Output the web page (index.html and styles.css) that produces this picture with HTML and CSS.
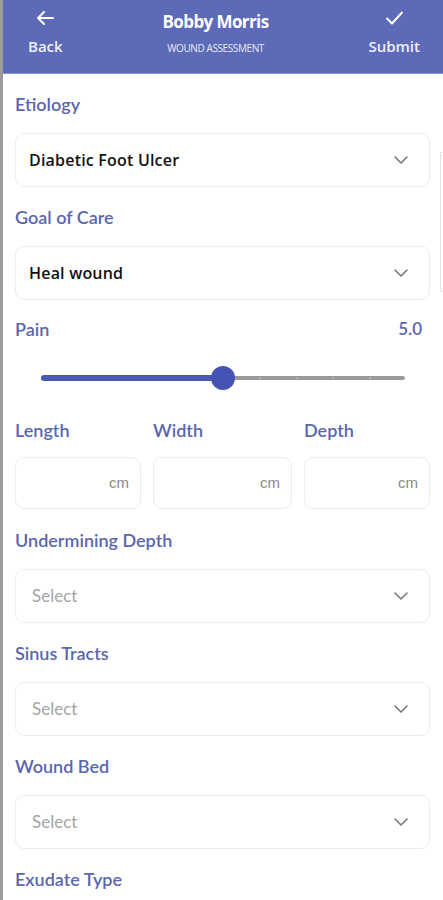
FILE: index.html
```html
<!DOCTYPE html>
<html lang="en">
<head>
<meta charset="UTF-8">
<meta name="viewport" content="width=device-width, initial-scale=1.0">
<title>Wound Assessment</title>
<link rel="stylesheet" href="styles.css">
</head>
<body>
<div class="screen">
	<div class="topbar">
		<a class="bar-btn" href="#">
			<svg width="20" height="16" viewBox="0 0 20 16"><path d="M18 8H3M9 2L3 8l6 6" fill="none" stroke="#fff" stroke-width="2" stroke-linecap="round" stroke-linejoin="round"/></svg>
			<span>Back</span>
		</a>
		<div class="bar-title">
			<h1>Bobby Morris</h1>
			<p>WOUND ASSESSMENT</p>
		</div>
		<a class="bar-btn" href="#">
			<svg width="20" height="16" viewBox="0 0 20 16"><path d="M3 8.5l5 5L18 2.5" fill="none" stroke="#fff" stroke-width="2" stroke-linecap="round" stroke-linejoin="round"/></svg>
			<span>Submit</span>
		</a>
	</div>

	<div class="form">
		<div class="field">
			<label>Etiology</label>
			<div class="select">
				<span class="val">Diabetic Foot Ulcer</span>
				<svg class="chev" width="16" height="10" viewBox="0 0 16 10"><path d="M2 2l6 6 6-6" fill="none" stroke="#777" stroke-width="1.6" stroke-linecap="round" stroke-linejoin="round"/></svg>
			</div>
		</div>
		<div class="field">
			<label>Goal of Care</label>
			<div class="select">
				<span class="val">Heal wound</span>
				<svg class="chev" width="16" height="10" viewBox="0 0 16 10"><path d="M2 2l6 6 6-6" fill="none" stroke="#777" stroke-width="1.6" stroke-linecap="round" stroke-linejoin="round"/></svg>
			</div>
		</div>
		<div class="field pain">
			<div class="pain-head">
				<label>Pain</label>
				<span class="pain-val">5.0</span>
			</div>
			<div class="slider">
				<div class="track">
					<div class="fill" style="width:50%"></div>
					<i class="tick" style="left:60%"></i>
					<i class="tick" style="left:70%"></i>
					<i class="tick" style="left:80%"></i>
					<i class="tick" style="left:90%"></i>
					<div class="thumb" style="left:50%"></div>
				</div>
			</div>
		</div>
		<div class="dims">
			<div class="dim">
				<label>Length</label>
				<div class="unit-box">cm</div>
			</div>
			<div class="dim">
				<label>Width</label>
				<div class="unit-box">cm</div>
			</div>
			<div class="dim">
				<label>Depth</label>
				<div class="unit-box">cm</div>
			</div>
		</div>
		<div class="field">
			<label>Undermining Depth</label>
			<div class="select">
				<span class="ph">Select</span>
				<svg class="chev" width="16" height="10" viewBox="0 0 16 10"><path d="M2 2l6 6 6-6" fill="none" stroke="#777" stroke-width="1.6" stroke-linecap="round" stroke-linejoin="round"/></svg>
			</div>
		</div>
		<div class="field">
			<label>Sinus Tracts</label>
			<div class="select">
				<span class="ph">Select</span>
				<svg class="chev" width="16" height="10" viewBox="0 0 16 10"><path d="M2 2l6 6 6-6" fill="none" stroke="#777" stroke-width="1.6" stroke-linecap="round" stroke-linejoin="round"/></svg>
			</div>
		</div>
		<div class="field">
			<label>Wound Bed</label>
			<div class="select">
				<span class="ph">Select</span>
				<svg class="chev" width="16" height="10" viewBox="0 0 16 10"><path d="M2 2l6 6 6-6" fill="none" stroke="#777" stroke-width="1.6" stroke-linecap="round" stroke-linejoin="round"/></svg>
			</div>
		</div>
		<div class="field">
			<label>Exudate Type</label>
		</div>
	</div>
	<div class="scroll-ind"></div>
</div>
</body>
</html>
```

FILE: styles.css
```css
html,body,div,p,h1,label{margin:0;padding:0;}
a{color:#fff;text-decoration:none;}
body{background:#fff;font-family:"Open Sans","Noto Sans",Arial,sans-serif;}
.screen{position:relative;width:440px;min-height:900px;border-left:3px solid #9c9c9c;overflow:hidden;}

.topbar{display:flex;justify-content:space-between;align-items:flex-start;height:73px;background:#5c6ab7;border-bottom:1px solid #8c96cc;padding:0 23px 0 25px;}
.bar-btn{display:flex;flex-direction:column;align-items:center;padding-top:10px;}
.bar-btn svg{display:block;}
.bar-btn span{font:600 15px/20px "Open Sans",sans-serif;margin-top:10px;color:#eef0fa;}
.bar-title{text-align:center;padding-top:10px;color:#fff;}
.bar-title h1{font:700 17px/24px "Open Sans",sans-serif;letter-spacing:-0.6px;}
.bar-title p{font:400 10px/14px "Open Sans",sans-serif;letter-spacing:-0.4px;margin-top:7px;color:#e8ebf7;}

.form{padding:18px 13px 0 12px;}
.field{margin-bottom:18px;}
label{display:block;font:600 18px/24px "Lato","Open Sans",sans-serif;color:#5a66ad;letter-spacing:0;}
.field > label{margin-bottom:17px;}
.select{display:flex;align-items:center;justify-content:space-between;height:52px;border:1px solid #ececec;border-radius:9px;padding:0 20px 0 13px;}
.val{font:600 16px/20px "Open Sans",sans-serif;color:#111;letter-spacing:0.2px;}
.ph{font:400 17px/20px "Lato",sans-serif;color:#a5a5a5;padding-left:3px;}
.chev{display:block;}

.pain{margin-bottom:0;}
.pain-head{display:flex;justify-content:space-between;align-items:center;margin-top:-1px;}
.pain-val{font:600 17px/24px "Lato",sans-serif;color:#5a66ad;padding-right:8px;}
.slider{height:42px;padding:35px 25px 0 26px;}
.track{position:relative;height:4px;background:#9a9a9a;border-radius:2px;}
.fill{position:absolute;left:0;top:-1px;height:6px;background:#4a58b5;border-radius:3px;}
.tick{position:absolute;top:1px;width:2px;height:2px;border-radius:1px;background:#b5b8cc;}
.thumb{position:absolute;top:-10px;width:24px;height:24px;margin-left:-12px;border-radius:50%;background:#4553b3;}

.dims{display:grid;grid-template-columns:126px 139px 1fr;column-gap:12px;margin-bottom:19px;}
.dim label{margin-bottom:15px;}
.unit-box{height:50px;border:1px solid #ececec;border-radius:9px;display:flex;align-items:center;justify-content:flex-end;padding-right:11px;font:400 15px/20px "Liberation Sans",Arial,sans-serif;color:#8a8a8a;}

.scroll-ind{position:absolute;right:0;top:152px;width:2px;height:138px;border:1px solid #e4e4e4;border-right:0;border-radius:2px 0 0 2px;}
```
